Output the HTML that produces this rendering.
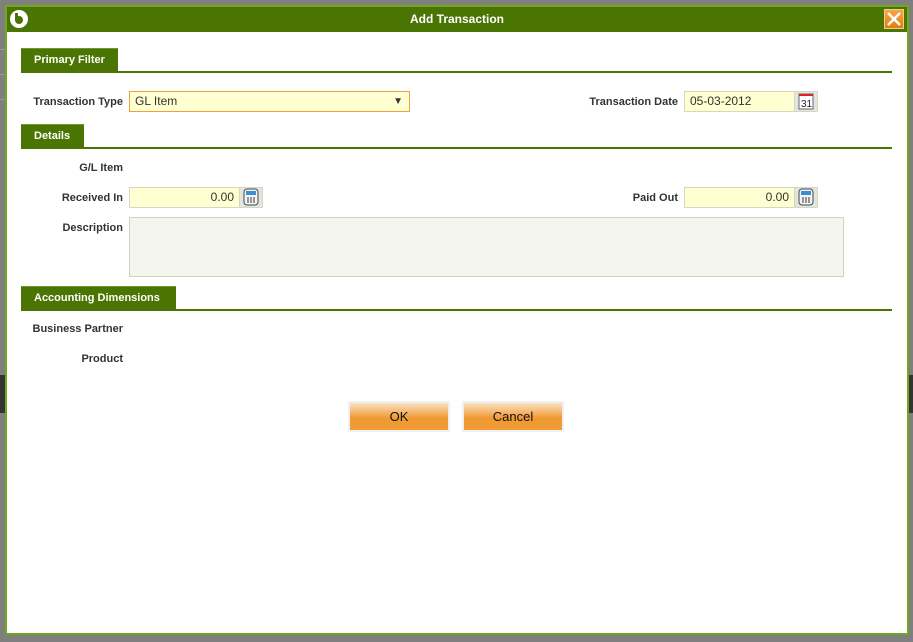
<!DOCTYPE html>
<html><head><meta charset="utf-8">
<style>
*{box-sizing:border-box;margin:0;padding:0}
body{width:913px;height:642px;background:#7f7f7f;position:relative;overflow:hidden;font-family:"Liberation Sans",sans-serif;font-size:11px;color:#333}
.dlg{position:absolute;left:5px;top:5px;width:904px;height:630px;border:2px solid #6fa81c;background:#fff}
.hdr{position:absolute;left:0;top:0;right:0;height:25px;background:#4a7502;color:#fff;font-weight:bold;font-size:12px;text-align:center;line-height:25px}
.logo{position:absolute;left:3px;top:3px;width:18px;height:18px;border-radius:50%;background:#fff}
.logo:after{content:"";position:absolute;left:5px;top:6px;width:8px;height:8px;border-radius:50%;background:#4a7502}
.logo:before{content:"";position:absolute;left:5px;top:3px;width:3px;height:8px;background:#4a7502}
.close{position:absolute;right:3px;top:2px;width:20px;height:20px;background:linear-gradient(#f5a742,#e07f10);border:1px solid #f7c98a}
.tab{position:absolute;left:14px;height:24px;background:#4a7502;color:#fff;font-weight:bold;font-size:11px;line-height:22px;padding-left:13px;border-top:1px solid #6c9a2e}
.line{position:absolute;left:14px;width:871px;height:2px;background:#4a7502}
.lbl{position:absolute;font-weight:bold;font-size:11px;text-align:right;color:#333}
.inp{position:absolute;height:21px;background:#ffffd1;border:1px solid #d4d7c4;font-size:12px;line-height:19px;padding:0 5px}
.btnic{position:absolute;width:24px;height:21px;background:#e3e6dc;border:1px solid #d4d7c4}
.btn{position:absolute;top:394px;width:102px;height:31px;background:#f0f0f0;padding:2px}
.btn div{width:98px;height:27px;background:linear-gradient(#fbe2c4 0,#f3a850 45%,#f09a33 55%,#f09a33);text-align:center;line-height:27px;font-size:13px;color:#111}
</style></head><body>
<div style="position:absolute;left:0;top:0;width:913px;height:642px">
<div style="position:absolute;left:0;top:375px;width:6px;height:38px;background:#333"></div>
<div style="position:absolute;left:908px;top:375px;width:5px;height:38px;background:#333"></div>
<div style="position:absolute;left:0;top:49px;width:5px;height:1px;background:#999"></div>
<div style="position:absolute;left:0;top:74px;width:5px;height:1px;background:#999"></div>
<div style="position:absolute;left:0;top:99px;width:5px;height:1px;background:#999"></div>
</div>
<div class="dlg">
<div class="hdr">Add Transaction
<div class="logo"></div>
<div class="close"><svg width="18" height="18" viewBox="0 0 18 18"><path d="M3 3L15 15M15 3L3 15" stroke="#fff" stroke-width="2.5"/></svg></div>
</div>
<div class="tab" style="top:41px;width:97px">Primary Filter</div>
<div class="line" style="top:64px"></div>
<div class="lbl" style="left:10px;top:89px;width:106px">Transaction Type</div>
<div class="inp" style="left:122px;top:84px;width:281px;border-color:#f0a040">GL Item<span style="position:absolute;right:6px;font-size:10px">▼</span></div>
<div class="lbl" style="left:560px;top:89px;width:111px">Transaction Date</div>
<div class="inp" style="left:677px;top:84px;width:111px">05-03-2012</div>
<div class="btnic" style="left:787px;top:84px"><svg width="22" height="19" viewBox="0 0 22 19"><rect x="4" y="2" width="14" height="15" fill="#fff" stroke="#667"/><rect x="4" y="2" width="14" height="2" fill="#d22"/><text x="6" y="15" font-size="10" font-family="Liberation Sans" fill="#223">31</text></svg></div>
<div class="tab" style="top:117px;width:63px">Details</div>
<div class="line" style="top:140px"></div>
<div class="lbl" style="left:10px;top:155px;width:106px">G/L Item</div>
<div class="lbl" style="left:10px;top:185px;width:106px">Received In</div>
<div class="inp" style="left:122px;top:180px;width:111px;text-align:right">0.00</div>
<div class="btnic" style="left:232px;top:180px"><svg width="22" height="19" viewBox="0 0 22 19"><rect x="4" y="1" width="14" height="16" rx="3" fill="#f4f4f4" stroke="#445"/><rect x="6" y="3" width="10" height="4" fill="#3a8fd8"/><path d="M7 10h2M10 10h2M13 10h2M7 12h2M10 12h2M13 12h2M7 14h2M10 14h2M13 14h2" stroke="#333"/></svg></div>
<div class="lbl" style="left:560px;top:185px;width:111px">Paid Out</div>
<div class="inp" style="left:677px;top:180px;width:111px;text-align:right">0.00</div>
<div class="btnic" style="left:787px;top:180px"><svg width="22" height="19" viewBox="0 0 22 19"><rect x="4" y="1" width="14" height="16" rx="3" fill="#f4f4f4" stroke="#445"/><rect x="6" y="3" width="10" height="4" fill="#3a8fd8"/><path d="M7 10h2M10 10h2M13 10h2M7 12h2M10 12h2M13 12h2M7 14h2M10 14h2M13 14h2" stroke="#333"/></svg></div>
<div class="lbl" style="left:10px;top:215px;width:106px">Description</div>
<div style="position:absolute;left:122px;top:210px;width:715px;height:60px;background:#f3f5ee;border:1px solid #cdd6bd"></div>
<div class="tab" style="top:279px;width:155px">Accounting Dimensions</div>
<div class="line" style="top:302px"></div>
<div class="lbl" style="left:10px;top:316px;width:106px">Business Partner</div>
<div class="lbl" style="left:10px;top:346px;width:106px">Product</div>
<div class="btn" style="left:341px"><div>OK</div></div>
<div class="btn" style="left:455px"><div>Cancel</div></div>
</div>
</body></html>
